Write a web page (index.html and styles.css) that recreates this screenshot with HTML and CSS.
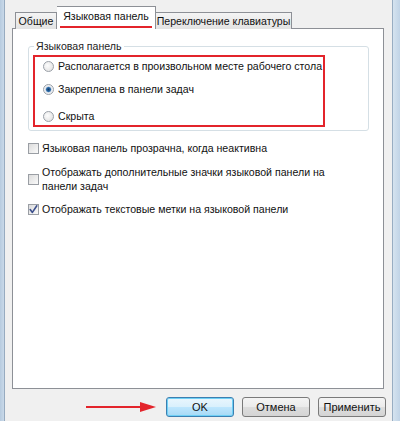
FILE: index.html
```html
<!DOCTYPE html>
<html lang="ru">
<head>
<meta charset="utf-8">
<link rel="stylesheet" href="styles.css">
</head>
<body>
<div class="window">
  <div class="frame-left"></div>
  <div class="dialog">
    <div class="tabs">
      <div class="tab tab-general">Общие</div>
      <div class="tab tab-active">Языковая панель</div>
      <div class="tab tab-switch">Переключение клавиатуры</div>
    </div>
    <div class="panel">
      <fieldset class="group">
        <legend class="group-title">Языковая панель</legend>
        <div class="highlight">
          <label class="option opt-1"><span class="radio"></span><span>Располагается в произвольном месте рабочего стола</span></label>
          <label class="option opt-2"><span class="radio checked"></span><span>Закреплена в панели задач</span></label>
          <label class="option opt-3"><span class="radio"></span><span>Скрыта</span></label>
        </div>
      </fieldset>
      <label class="check check-1"><span class="box"></span><span>Языковая панель прозрачна, когда неактивна</span></label>
      <label class="check check-2"><span class="box"></span><span class="wrap">Отображать дополнительные значки языковой панели на панели задач</span></label>
      <label class="check check-3"><span class="box checked"><svg viewBox="0 0 11 11" width="11" height="11"><path d="M2.2 5.6 L4.4 8.4 L8.8 1.8" fill="none" stroke="#3c4f8c" stroke-width="1.6" stroke-linecap="round" stroke-linejoin="round"/></svg></span><span>Отображать текстовые метки на языковой панели</span></label>
    </div>
    <div class="buttons">
      <svg class="arrow" width="72" height="12" viewBox="0 0 72 12"><line x1="0" y1="6" x2="58" y2="6" stroke="#e3242b" stroke-width="2"/><polygon points="54,1 70,6 54,11" fill="#e3242b"/></svg>
      <button class="btn btn-default">OK</button>
      <button class="btn">Отмена</button>
      <button class="btn">Применить</button>
    </div>
  </div>
  <div class="frame-right"></div>
</div>
</body>
</html>
```
FILE: styles.css
```css
html, body {
  margin: 0;
  padding: 0;
  height: 421px;
  overflow: hidden;
}
body {
  font-family: "Liberation Sans", Arial, sans-serif;
  font-size: 10.6px;
  color: #111;
  background: #f0f0f0;
}
.window {
  display: flex;
  height: 421px;
}
.frame-left {
  width: 4px;
  background: linear-gradient(to right, #b7cbdf, #c9d9e9);
  border-right: 1px solid #97abc0;
}
.frame-right {
  width: 7px;
  background: linear-gradient(to right, #d5e3ef, #c0d3e6);
  border-left: 1px solid #98adc2;
}
.dialog {
  flex: 1;
  padding: 7px 8px 0 7px;
  background: #f0f0f0;
}
.tabs {
  display: flex;
  align-items: flex-end;
  height: 22px;
  margin-left: 3px;
  margin-bottom: -1px;
  position: relative;
  z-index: 1;
}
.tab {
  height: 17px;
  line-height: 16px;
  box-sizing: border-box;
  border: 1px solid #8d9096;
  border-bottom: none;
  background: linear-gradient(#f4f4f4, #e3e3e3);
  text-align: center;
  color: #111;
  white-space: nowrap;
}
.tab-general { width: 42px; }
.tab-switch { width: 136px; border-left: none; }
.tab-active {
  width: 99px;
  height: 23px;
  line-height: 18px;
  background: #fff;
  border-left: none;
  border-right: 1px solid #8d9096;
  position: relative;
}
.tab-active::after {
  content: "";
  position: absolute;
  left: 3px;
  right: 3px;
  bottom: 1px;
  height: 2px;
  background: #e3242b;
}
.panel {
  height: 361px;
  box-sizing: border-box;
  border: 1px solid #8d9096;
  background: #fff;
  padding-top: 10px;
}
.group {
  margin: 0 14px 0 15px;
  padding: 0 4px 3px 4px;
  border: 1px solid #d5dfe5;
  border-radius: 3px;
}
.group-title {
  padding: 0 2px;
  margin-left: 1px;
  line-height: 14px;
  color: #1e1e1e;
}
.highlight {
  margin-top: 2px;
  width: 292px;
  box-sizing: border-box;
  border: 2px solid #e3242b;
  padding: 2px 0 2px 8px;
}
.option {
  display: flex;
  align-items: center;
  height: 14px;
  line-height: 14px;
  white-space: nowrap;
}
.opt-2 { margin-top: 9px; }
.opt-3 { margin-top: 13px; }
.radio {
  width: 11px;
  height: 11px;
  box-sizing: border-box;
  border: 1px solid #9aa0a8;
  border-radius: 50%;
  background: radial-gradient(circle at 40% 40%, #fdfdfd, #dcdcdc);
  margin-right: 4px;
  flex: none;
  position: relative;
}
.radio.checked {
  background: radial-gradient(circle, #123a66 0, #2a6aa8 2px, #e4e8ee 3.2px, #f8f8f8 5px);
}
.check {
  display: flex;
  align-items: center;
  margin-left: 15px;
  line-height: 14px;
}
.check-1 { margin-top: 10px; }
.check-2 { margin-top: 10px; }
.check-3 { margin-top: 9px; }
.wrap { max-width: 300px; }
.box {
  width: 11px;
  height: 11px;
  box-sizing: border-box;
  border: 1px solid #9a9ea4;
  background: linear-gradient(135deg, #dcdcdc, #fafafa);
  margin-right: 3px;
  flex: none;
  display: flex;
  align-items: center;
  justify-content: center;
}
.box svg { display: block; margin: -1px; }
.buttons {
  display: flex;
  justify-content: flex-end;
  align-items: center;
  gap: 8px;
  margin-top: 8px;
  margin-right: -2px;
}
.btn {
  width: 68px;
  height: 20px;
  font-family: inherit;
  font-size: 11px;
  color: #111;
  border: 1px solid #7a7a7a;
  border-radius: 3px;
  background: linear-gradient(#f4f4f4 0, #ebebeb 50%, #dddddd 51%, #d4d4d4 100%);
  padding: 0;
}
.btn-default {
  border-color: #3c7fb1;
  box-shadow: inset 0 0 0 1px #6fd0f5;
  background: linear-gradient(#eaf6fd 0, #d9f0fc 50%, #bee6fd 51%, #a7d9f5 100%);
}
```
